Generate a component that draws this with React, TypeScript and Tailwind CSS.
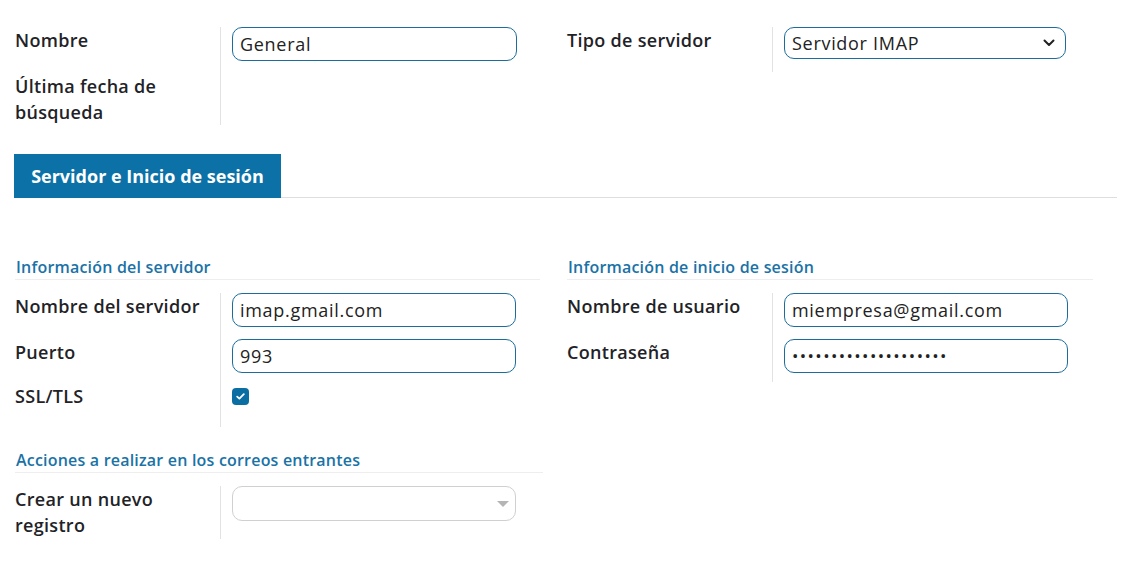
import React from 'react';

const font = { fontFamily: '"Open Sans", "Noto Sans", sans-serif' };

function Field({ label, children, last }: { label: React.ReactNode; children?: React.ReactNode; last?: string }) {
  return (
    <div className="flex">
      <div className="w-[205px] shrink-0 text-[18px] font-semibold leading-[26px] tracking-[0.3px] text-[#1f2328]">{label}</div>
      <div className={`flex-1 border-l border-[#e2e2e2] pl-[11px] ${last ?? 'pb-[12px]'}`}>{children}</div>
    </div>
  );
}

function TextInput({ value, w = 'w-[285px]' }: { value: string; w?: string }) {
  return (
    <div className={`${w} h-[34px] rounded-[10px] border border-[#1b6d9c] px-[7px] text-[18px] leading-[32px] tracking-[0.7px] text-[#222]`}>
      {value}
    </div>
  );
}

function SectionTitle({ children, w }: { children: React.ReactNode; w: string }) {
  return (
    <div className={`${w} border-b border-[#eeeeee] pb-[2px] pl-px text-[16px] font-semibold leading-[20px] tracking-[0.2px] text-[#1a72a6]`}>
      {children}
    </div>
  );
}

export default function App() {
  return (
    <div className="min-h-[570px] bg-white pl-[15px] pt-[27px]" style={font}>
      {/* cabecera */}
      <div className="flex">
        <div className="w-[552px]">
          <Field label="Nombre">
            <TextInput value="General" />
          </Field>
          <Field label={<>Última fecha de<br />búsqueda</>} last="h-[52px]" />
        </div>
        <div className="w-[526px]">
          <Field label="Tipo de servidor" last="pb-[13px]">
            <div className="flex h-[32px] w-[282px] items-center justify-between rounded-[10px] border border-[#1b6d9c] pl-[7px] pr-[10px] text-[18px] tracking-[0.7px] text-[#222]">
              <span>Servidor IMAP</span>
              <svg width="12" height="8" viewBox="0 0 12 8" fill="none">
                <path d="M1.5 1.5 6 6l4.5-4.5" stroke="#222" strokeWidth="2" strokeLinecap="round" strokeLinejoin="round" />
              </svg>
            </div>
          </Field>
        </div>
      </div>

      {/* pestaña */}
      <div className="mt-[29px] -ml-px flex w-[1103px] border-b border-[#dedede]">
        <div className="-mb-px flex h-[44px] w-[267px] items-center justify-center bg-[#0b71a7] text-[18px] font-bold text-white">
          Servidor e Inicio de sesión
        </div>
      </div>

      {/* secciones */}
      <div className="mt-[59px] flex">
        <div className="w-[552px]">
          <SectionTitle w="w-[525px]">Información del servidor</SectionTitle>
          <div className="mt-[13px]">
            <Field label="Nombre del servidor">
              <TextInput value="imap.gmail.com" w="w-[284px]" />
            </Field>
            <Field label="Puerto" last="pb-[10px]">
              <TextInput value="993" w="w-[284px]" />
            </Field>
            <Field label="SSL/TLS" last="h-[44px] pt-[5px]">
              <div className="flex h-[17px] w-[17px] items-center justify-center rounded-[4px] bg-[#0b6ea3]">
                <svg width="9" height="7" viewBox="0 0 9 7" fill="none">
                  <path d="M1.2 3.6 3.4 5.6 7.8 1.2" stroke="white" strokeWidth="1.8" strokeLinecap="round" strokeLinejoin="round" />
                </svg>
              </div>
            </Field>
          </div>

          <div className="mt-[23px]">
            <SectionTitle w="w-[528px]">Acciones a realizar en los correos entrantes</SectionTitle>
            <div className="mt-[13px]">
              <Field label={<>Crear un nuevo<br />registro</>} last="h-[53px]">
                <div className="flex h-[35px] w-[284px] items-center justify-end rounded-[10px] border border-[#d0d0d0] pr-[6px]">
                  <svg width="12" height="6" viewBox="0 0 12 6">
                    <path d="M0 0h12L6 6z" fill="#b5b5b5" />
                  </svg>
                </div>
              </Field>
            </div>
          </div>
        </div>

        <div className="w-[526px]">
          <SectionTitle w="w-[526px]">Información de inicio de sesión</SectionTitle>
          <div className="mt-[13px]">
            <Field label="Nombre de usuario">
              <TextInput value="miempresa@gmail.com" w="w-[284px]" />
            </Field>
            <Field label="Contraseña" last="pb-[9px]">
              <div className="h-[34px] w-[284px] rounded-[10px] border border-[#1b6d9c] px-[7px] text-[17px] leading-[32px] tracking-[1.4px] text-[#222]">
                ••••••••••••••••••••
              </div>
            </Field>
          </div>
        </div>
      </div>
    </div>
  );
}
